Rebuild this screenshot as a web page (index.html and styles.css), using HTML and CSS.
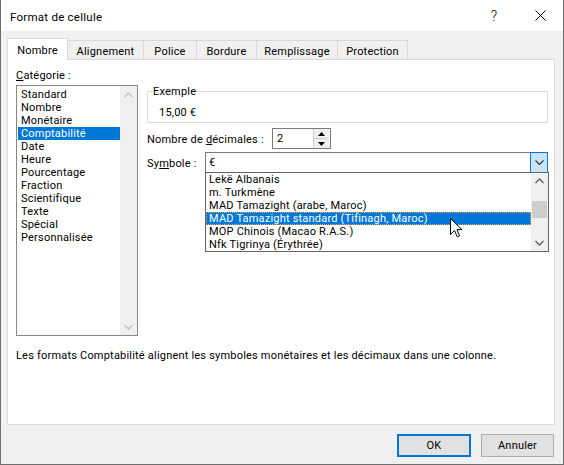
FILE: index.html
```html
<!DOCTYPE html>
<html lang="fr">
<head>
<meta charset="utf-8">
<title>Format de cellule</title>
<link rel="stylesheet" href="styles.css">
</head>
<body>
<div class="window">
  <div class="titlebar">
    <span class="title">Format de cellule</span>
    <span class="capbtn help">?</span>
    <span class="capbtn close"><svg width="11" height="11" viewBox="0 0 11 11"><path d="M0.5 0.5 L10.5 10.5 M10.5 0.5 L0.5 10.5" stroke="#000" stroke-width="1" fill="none"/></svg></span>
  </div>
  <div class="client">
    <div class="tabs">
      <div class="tab active w-nombre">Nombre</div>
      <div class="tab w-align">Alignement</div>
      <div class="tab w-police">Police</div>
      <div class="tab w-bordure">Bordure</div>
      <div class="tab w-rempl">Remplissage</div>
      <div class="tab w-protect">Protection</div>
    </div>
    <div class="panel">
      <div class="cols">
        <div class="left">
          <div class="label"><u>C</u>atégorie :</div>
          <div class="listbox">
            <div class="items">
              <div class="item">Standard</div>
              <div class="item">Nombre</div>
              <div class="item">Monétaire</div>
              <div class="item selected">Comptabilité</div>
              <div class="item">Date</div>
              <div class="item">Heure</div>
              <div class="item">Pourcentage</div>
              <div class="item">Fraction</div>
              <div class="item">Scientifique</div>
              <div class="item">Texte</div>
              <div class="item">Spécial</div>
              <div class="item">Personnalisée</div>
            </div>
            <div class="vscroll disabled">
              <span class="sbtn"><svg width="9" height="6" viewBox="0 0 9 6"><path d="M0.5 5 L4.5 1 L8.5 5" stroke="#c2c2c2" stroke-width="1.4" fill="none"/></svg></span>
              <span class="strack"></span>
              <span class="sbtn"><svg width="9" height="6" viewBox="0 0 9 6"><path d="M0.5 1 L4.5 5 L8.5 1" stroke="#c2c2c2" stroke-width="1.4" fill="none"/></svg></span>
            </div>
          </div>
        </div>
        <div class="right">
          <fieldset class="sample">
            <legend>Exemple</legend>
            <div class="sample-value">15,00 €</div>
          </fieldset>
          <div class="row spinrow">
            <span class="rlabel lbl-dec">Nombre de <u>d</u>écimales :</span>
            <div class="spin">
              <span class="spin-val">2</span>
              <div class="spinbtns">
                <span class="sp"><svg width="7" height="4" viewBox="0 0 7 4"><path d="M0 4 L3.5 0 L7 4 Z" fill="#000"/></svg></span>
                <span class="sp"><svg width="7" height="4" viewBox="0 0 7 4"><path d="M0 0 L3.5 4 L7 0 Z" fill="#000"/></svg></span>
              </div>
            </div>
          </div>
          <div class="row comborow">
            <span class="rlabel lbl-sym">Sy<u>m</u>bole :</span>
            <div class="combo">
              <span class="combo-val">€</span>
              <span class="combo-btn"><svg width="9" height="5" viewBox="0 0 9 5"><path d="M0.5 0.5 L4.5 4.5 L8.5 0.5" stroke="#333" stroke-width="1.1" fill="none"/></svg></span>
              <div class="dropdown">
                <div class="ditems">
                  <div class="ditem">Lekë Albanais</div>
                  <div class="ditem">m. Turkmène</div>
                  <div class="ditem">MAD Tamazight (arabe, Maroc)</div>
                  <div class="ditem selected focus">MAD Tamazight standard (Tifinagh, Maroc)</div>
                  <div class="ditem">MOP Chinois (Macao R.A.S.)</div>
                  <div class="ditem">Nfk Tigrinya (Érythrée)</div>
                </div>
                <div class="vscroll small">
                  <span class="sbtn"><svg width="9" height="6" viewBox="0 0 9 6"><path d="M0.5 5 L4.5 1 L8.5 5" stroke="#606060" stroke-width="1.4" fill="none"/></svg></span>
                  <span class="strack"><span class="thumb"></span></span>
                  <span class="sbtn"><svg width="9" height="6" viewBox="0 0 9 6"><path d="M0.5 1 L4.5 5 L8.5 1" stroke="#606060" stroke-width="1.4" fill="none"/></svg></span>
                </div>
                <svg class="cursor" width="13" height="20" viewBox="0 0 13 20"><path d="M0.5 0.5 L0.5 16.5 L4.5 12.5 L7.2 18.8 L9.6 17.8 L7 11.6 L12 11.6 Z" fill="#fff" stroke="#000" stroke-width="1" stroke-linejoin="miter"/></svg>
              </div>
            </div>
          </div>
        </div>
      </div>
      <p class="desc">Les formats Comptabilité alignent les symboles monétaires et les décimaux dans une colonne.</p>
    </div>
    <div class="buttons">
      <span class="btn default">OK</span>
      <span class="btn">Annuler</span>
    </div>
  </div>
</div>
</body>
</html>
```
FILE: styles.css
```css
* { box-sizing: border-box; }
html, body { margin: 0; padding: 0; }
body {
  width: 564px;
  height: 465px;
  overflow: hidden;
  background: #fff;
  font-family: Roboto, "Noto Sans", sans-serif;
  font-size: 11px;
  letter-spacing: 0.2px;
  color: #000;
}
u { text-decoration: underline; text-underline-offset: 1px; }

.window {
  width: 564px;
  height: 465px;
  border: 1px solid #6e6e6e;
  border-top: none;
  display: flex;
  flex-direction: column;
  background: #f0f0f0;
}

.titlebar {
  height: 31px;
  flex: none;
  background: #fff;
  display: flex;
  align-items: center;
  padding-left: 9px;
}
.title { flex: 1; font-size: 11.5px; letter-spacing: 0.25px; padding-top: 2px; }
.capbtn {
  width: 46px;
  height: 31px;
  display: flex;
  align-items: center;
  justify-content: center;
}
.help { font-size: 14px; font-weight: 300; padding-top: 1px; }
.close svg { display: block; }

.client {
  flex: 1;
  display: flex;
  flex-direction: column;
  padding: 7px 8px 0 6px;
}

.tabs {
  height: 21px;
  display: flex;
  align-items: flex-end;
  flex: none;
}
.tab {
  height: 19px;
  border: 1px solid #d9d9d9;
  border-bottom: none;
  margin-right: -1px;
  background: #f0f0f0;
  display: flex;
  align-items: center;
  justify-content: center;
  padding-top: 2px;
}
.tab.active {
  height: 22px;
  background: #fff;
  margin-bottom: -1px;
  position: relative;
  z-index: 1;
  padding-top: 1px;
  padding-bottom: 0;
}
.w-nombre { width: 61px; }
.w-align { width: 77px; }
.w-police { width: 54px; }
.w-bordure { width: 61px; }
.w-rempl { width: 82px; }
.w-protect { width: 71px; }

.panel {
  height: 366px;
  flex: none;
  background: #fff;
  border: 1px solid #d9d9d9;
  padding: 7px 0 0 8px;
}
.cols { display: flex; gap: 9px; }
.left { width: 122px; flex: none; }
.label { height: 15px; line-height: 15px; margin-bottom: 3px; padding-top: 1px; }

.listbox {
  height: 251px;
  border: 1px solid #828790;
  display: flex;
  background: #fff;
}
.items { flex: 1; padding: 2px 0 0 1px; }
.item { height: 13px; line-height: 14px; padding-left: 3px; white-space: nowrap; }
.item.selected { background: #0078d7; color: #fff; }

.vscroll {
  width: 17px;
  flex: none;
  background: #f0f0f0;
  display: flex;
  flex-direction: column;
}
.sbtn {
  height: 17px;
  flex: none;
  display: flex;
  align-items: center;
  justify-content: center;
}
.sbtn svg { display: block; }
.strack { flex: 1; position: relative; }

.right { flex: 1; padding-right: 6px; }

.sample {
  margin: 17px 0 0 0;
  border: 1px solid #dcdcdc;
  padding: 0 0 2px 5px;
  min-width: 0;
}
.sample legend { padding: 0; line-height: 15px; }
.sample-value { line-height: 15px; margin-top: 6px; padding-left: 6px; }

.row { display: flex; align-items: center; }
.spinrow { margin-top: 5px; }
.comborow { margin-top: 3px; }
.rlabel { flex: none; padding-top: 1px; }
.lbl-dec { width: 125px; }
.lbl-sym { width: 58px; }

.spin {
  width: 59px;
  height: 21px;
  border: 1px solid #7a7a7a;
  display: flex;
  align-items: center;
  background: #fff;
}
.spin-val { padding-left: 4px; flex: 1; }
.spinbtns {
  width: 16px;
  height: 19px;
  margin-right: 1px;
  display: flex;
  flex-direction: column;
  border-left: 1px solid #d0d0d0;
}
.sp {
  flex: 1;
  display: flex;
  align-items: center;
  justify-content: center;
  background: #f0f0f0;
}
.sp + .sp { border-top: 1px solid #d0d0d0; }
.sp svg { display: block; }

.combo {
  flex: 1;
  height: 21px;
  border: 1px solid #7a7a7a;
  display: flex;
  align-items: center;
  position: relative;
  background: #fff;
}
.combo-val { padding-left: 3px; flex: 1; }
.combo-btn {
  width: 18px;
  align-self: stretch;
  margin: -1px -1px -1px 0;
  border: 1px solid #0078d7;
  background: #cce4f7;
  display: flex;
  align-items: center;
  justify-content: center;
}
.combo-btn svg { display: block; }

.dropdown {
  position: absolute;
  left: -1px;
  right: -2px;
  top: 19px;
  height: 80px;
  border: 1px solid #646464;
  background: #fff;
  display: flex;
  z-index: 5;
}
.ditems { flex: 1; }
.ditem { height: 13px; line-height: 14px; padding-left: 3px; white-space: nowrap; }
.ditem.selected { background: #0078d7; color: #fff; }
.ditem.focus { outline: 1px dotted #f7a23c; outline-offset: -1px; }
.vscroll.small .sbtn { height: 16px; }
.thumb {
  position: absolute;
  left: 1px;
  right: 1px;
  top: 12px;
  height: 17px;
  background: #cdcdcd;
}
.cursor { position: absolute; left: 244px; top: 45px; display: block; }

.desc { margin: 12px 0 0 0; line-height: 15px; }

.buttons {
  display: flex;
  justify-content: flex-end;
  gap: 10px;
  padding: 9px 1px 0 0;
}
.btn {
  height: 23px;
  width: 73px;
  border: 1px solid #adadad;
  background: #e1e1e1;
  display: flex;
  align-items: center;
  justify-content: center;
}
.btn.default { width: 74px; border: 2px solid #0078d7; }
```
